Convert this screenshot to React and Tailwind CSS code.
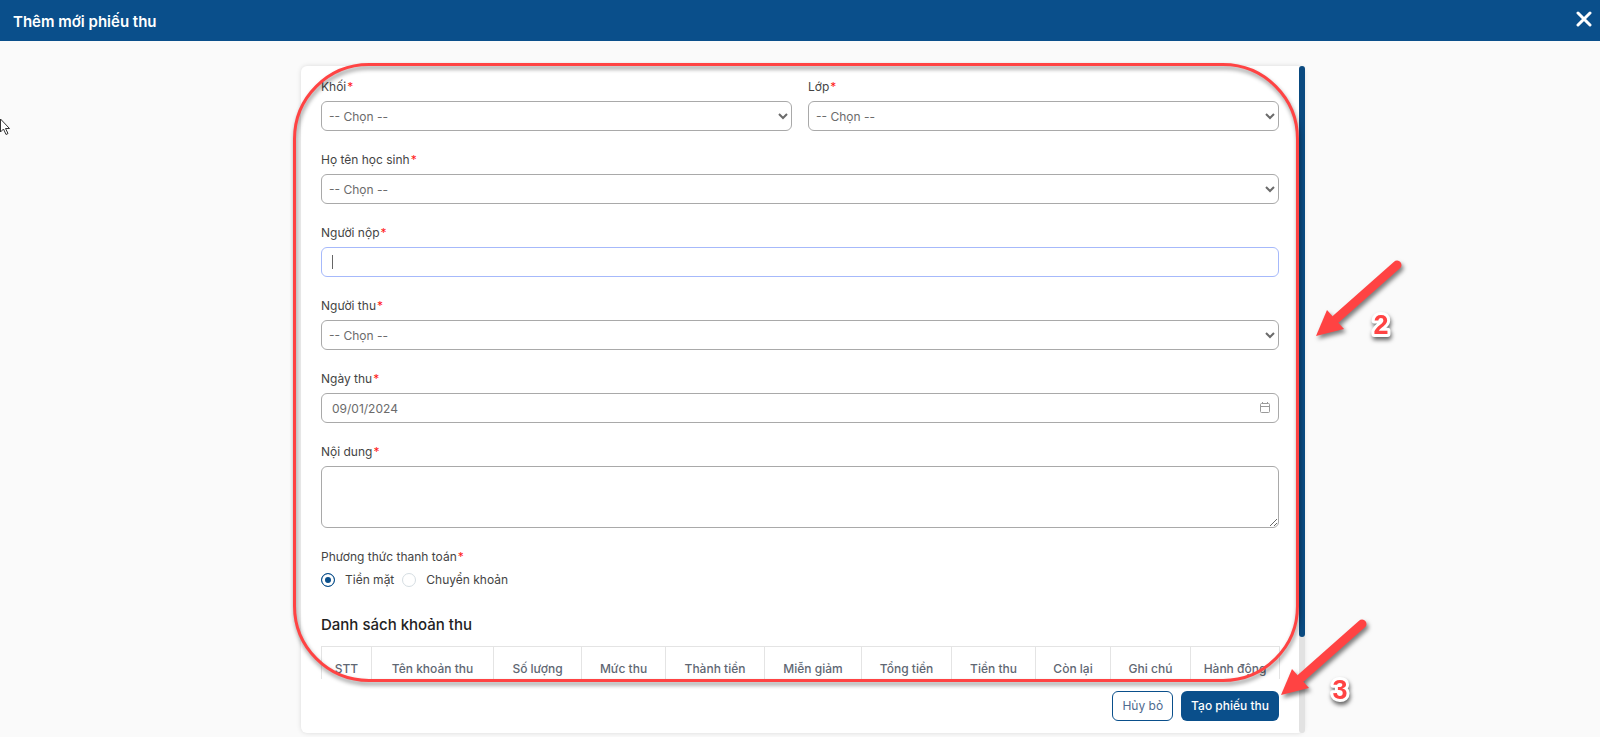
import React, { useState } from "react";

const COLUMNS = [
  { label: "STT", width: "w-[50px]" },
  { label: "Tên khoản thu", width: "w-[122px]" },
  { label: "Số lượng", width: "w-[88px]" },
  { label: "Mức thu", width: "w-[84px]" },
  { label: "Thành tiền", width: "w-[99px]" },
  { label: "Miễn giảm", width: "w-[97px]" },
  { label: "Tổng tiền", width: "w-[90px]" },
  { label: "Tiền thu", width: "w-[84px]" },
  { label: "Còn lại", width: "w-[75px]" },
  { label: "Ghi chú", width: "w-[80px]" },
  { label: "Hành động", width: "w-[89px]" },
];

const METHODS = [
  { value: "cash", label: "Tiền mặt" },
  { value: "transfer", label: "Chuyển khoản" },
];

function Required() {
  return <span className="ml-px text-[#ff1a1a]">*</span>;
}

function Field({ id, label, children }) {
  return (
    <div className="mb-[19px] flex flex-col">
      <label htmlFor={id} className="mb-1 leading-5">
        {label}
        <Required />
      </label>
      {children}
    </div>
  );
}

function SelectField({ id, label }) {
  return (
    <Field id={id} label={label}>
      <select
        id={id}
        className="h-[30px] w-full rounded-md border border-[#a9a9a9] bg-white pl-[3px] text-[#6b6b6b]"
      >
        <option>-- Chọn --</option>
      </select>
    </Field>
  );
}

function CalendarIcon() {
  return (
    <svg
      className="pointer-events-none absolute right-2 top-[9px] h-3 w-3"
      viewBox="0 0 12 12"
      fill="none"
      stroke="#9a9a9a"
    >
      <rect x="1.5" y="1.5" width="9" height="9" rx="1" />
      <path d="M1.5 4.5h9M3.5 0v2M8.5 0v2" />
    </svg>
  );
}

function Arrow({ className }) {
  return (
    <svg
      className={`pointer-events-none absolute h-[90px] w-[100px] drop-shadow-[2px_3px_2px_rgba(0,0,0,0.5)] ${className}`}
      viewBox="0 0 100 90"
      fill="#ff4343"
    >
      <path d="M24 63L85 9" stroke="#ff4343" strokeWidth="9" strokeLinecap="round" />
      <path d="M4 80L15 54L32 73z" />
    </svg>
  );
}

function StepNumber({ value, className }) {
  return (
    <svg
      className={`pointer-events-none absolute h-10 w-8 drop-shadow-[1px_3px_2px_rgba(0,0,0,0.6)] ${className}`}
      viewBox="0 0 32 40"
    >
      <text
        x="16"
        y="29"
        textAnchor="middle"
        className="font-['Liberation_Sans',sans-serif] text-[27px] font-bold"
        fill="#ff4343"
        stroke="#fff"
        strokeWidth="6"
        strokeLinejoin="round"
        paintOrder="stroke"
      >
        {value}
      </text>
    </svg>
  );
}

function Cursor() {
  return (
    <svg className="pointer-events-none absolute left-0 top-[118px] h-[18px] w-3" viewBox="0 0 12 18">
      <path d="M0.5 1v13l3-3 2.5 5.5 2-1-2.500-5h4z" fill="#fff" stroke="#333" />
    </svg>
  );
}

function App() {
  const [method, setMethod] = useState("cash");
  const [payer, setPayer] = useState("");
  const [date, setDate] = useState("09/01/2024");

  return (
    <div className="relative flex h-screen flex-col overflow-hidden bg-[#fafafa] font-[Inter,'Noto_Sans',sans-serif] text-xs text-[#444]">
      <header className="flex h-[41px] shrink-0 items-center justify-between bg-[#0a4f8b] pl-[13px] pr-1.5 text-white">
        <h1 className="pt-0.5 text-[15px] font-semibold">Thêm mới phiếu thu</h1>
        <button type="button" aria-label="Đóng" className="mb-1 flex h-5 w-5 items-center justify-center">
          <svg className="h-4 w-4" viewBox="0 0 16 16" stroke="#fff" strokeWidth="3" strokeLinecap="round">
            <path d="M2 2l12 12M14 2l-12 12" />
          </svg>
        </button>
      </header>

      <main className="flex min-h-0 flex-1 justify-center pb-1 pl-[5px] pt-[25px]">
        <form
          className="relative flex w-full max-w-[1003px] flex-col rounded-md bg-white shadow-[0_0_5px_rgba(0,0,0,0.13)]"
          onSubmit={(e) => e.preventDefault()}
        >
          <div className="min-h-0 flex-1 overflow-y-auto pl-5 pr-[25px] pt-[11px] [scrollbar-width:none]">
            <div className="grid grid-cols-2 gap-x-4">
              <SelectField id="grade" label="Khối" />
              <SelectField id="class" label="Lớp" />
            </div>
            <SelectField id="student" label="Họ tên học sinh" />

            <Field id="payer" label="Người nộp">
              <div className="relative">
                <input
                  id="payer"
                  type="text"
                  value={payer}
                  onChange={(e) => setPayer(e.target.value)}
                  className="block h-[30px] w-full rounded-md border border-[#a6b9fb] bg-white px-[10px] caret-transparent outline-none"
                />
                <span className="pointer-events-none absolute left-[11px] top-2 h-[14px] w-px bg-[#666]" />
              </div>
            </Field>

            <SelectField id="collector" label="Người thu" />

            <Field id="date" label="Ngày thu">
              <div className="relative">
                <input
                  id="date"
                  type="text"
                  value={date}
                  onChange={(e) => setDate(e.target.value)}
                  className="block h-[30px] w-full rounded-md border border-[#a9a9a9] bg-white px-[10px] text-[#6b6b6b]"
                />
                <CalendarIcon />
              </div>
            </Field>

            <Field id="content" label="Nội dung">
              <textarea
                id="content"
                className="block h-[62px] w-full rounded-md border border-[#a9a9a9] bg-white px-[10px] py-1.5"
              />
            </Field>

            <fieldset>
              <legend className="leading-5">
                Phương thức thanh toán
                <Required />
              </legend>
              <div className="mt-[3px] flex items-center gap-2 leading-5">
                {METHODS.map((m) => (
                  <label key={m.value} className="flex items-center gap-[10px]">
                    <input
                      type="radio"
                      name="method"
                      checked={method === m.value}
                      onChange={() => setMethod(m.value)}
                      className="h-[14px] w-[14px] appearance-none rounded-full border border-[#d5dde2] bg-white checked:border-[#0a4f8b] checked:bg-[#0a4f8b] checked:shadow-[inset_0_0_0_3px_white]"
                    />
                    {m.label}
                  </label>
                ))}
              </div>
            </fieldset>

            <h2 className="mb-[9px] mt-[23px] text-[15px] font-medium leading-6 text-[#222]">
              Danh sách khoản thu
            </h2>
            <table className="mb-5 w-full table-fixed border-collapse">
              <thead>
                <tr>
                  {COLUMNS.map((col) => (
                    <th
                      key={col.label}
                      className={`h-11 border border-[#e4e4e4] p-0 text-center font-medium text-[#5f6773] ${col.width}`}
                    >
                      {col.label}
                    </th>
                  ))}
                </tr>
              </thead>
              <tbody>
                <tr>
                  <td colSpan={COLUMNS.length} className="h-10 border border-[#e4e4e4]" />
                </tr>
              </tbody>
            </table>
          </div>

          <footer className="flex h-[54px] shrink-0 items-start justify-end gap-2 pr-[25px] pt-3">
            <button
              type="button"
              className="h-[30px] rounded-md border border-[#0a4f8b] bg-white px-[9px] text-[#4f6b8f]"
            >
              Hủy bỏ
            </button>
            <button type="submit" className="h-[30px] rounded-md bg-[#0a4f8b] px-[10px] font-medium text-white">
              Tạo phiếu thu
            </button>
          </footer>

          {/* scroll track */}
          <div className="absolute inset-y-0 -right-px w-1.5 rounded-full bg-[#e2e2e2]">
            <div className="h-[571px] rounded-full bg-[#0a4a80]" />
          </div>

          {/* guide annotations */}
          <div className="pointer-events-none absolute -left-2 -top-[3px] bottom-[51px] right-[5px] rounded-[76px] border-[3px] border-[#ff4343] drop-shadow-[1px_3px_2px_rgba(0,0,0,0.45)]" />
          <Arrow className="-right-[108px] top-[190px]" />
          <StepNumber value="2" className="-right-[93px] top-[239px]" />
          <Arrow className="-right-[73px] top-[549px]" />
          <StepNumber value="3" className="-right-[52px] top-[604px]" />
        </form>
      </main>

      <Cursor />
    </div>
  );
}

export default App;
